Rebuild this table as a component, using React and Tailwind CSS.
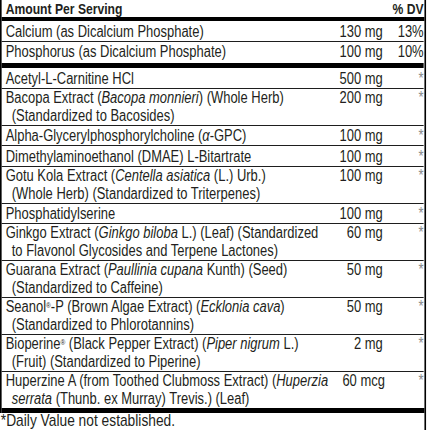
// Label is set in Arial metrics and squeezed horizontally to read as Arial Narrow / Helvetica Condensed.
const rows = [
  { name: ['Calcium (as Dicalcium Phosphate)'], amount: '130 mg', dv: '13%' },
  { name: ['Phosphorus (as Dicalcium Phosphate)'], amount: '100 mg', dv: '10%', bar: true },
  { name: ['Acetyl-L-Carnitine HCl'], amount: '500 mg' },
  {
    name: [
      <>Bacopa Extract (<i>Bacopa monnieri</i>) (Whole Herb)</>,
      '(Standardized to Bacosides)',
    ],
    amount: '200 mg',
  },
  { name: [<>Alpha-Glycerylphosphorylcholine (<i>α</i>-GPC)</>], amount: '100 mg' },
  { name: ['Dimethylaminoethanol (DMAE) L-Bitartrate'], amount: '100 mg' },
  {
    name: [
      <>Gotu Kola Extract (<i>Centella asiatica</i> (L.) Urb.)</>,
      '(Whole Herb) (Standardized to Triterpenes)',
    ],
    amount: '100 mg',
  },
  { name: ['Phosphatidylserine'], amount: '100 mg' },
  {
    name: [
      <>Ginkgo Extract (<i>Ginkgo biloba</i> L.) (Leaf) (Standardized</>,
      'to Flavonol Glycosides and Terpene Lactones)',
    ],
    amount: '60 mg',
  },
  {
    name: [
      <>Guarana Extract (<i>Paullinia cupana</i> Kunth) (Seed)</>,
      '(Standardized to Caffeine)',
    ],
    amount: '50 mg',
  },
  {
    name: [
      <>Seanol<sup className="text-[8px]">®</sup>-P (Brown Algae Extract) (<i>Ecklonia cava</i>)</>,
      '(Standardized to Phlorotannins)',
    ],
    amount: '50 mg',
  },
  {
    name: [
      <>Bioperine<sup className="text-[8px]">®</sup> (Black Pepper Extract) (<i>Piper nigrum</i> L.)</>,
      '(Fruit) (Standardized to Piperine)',
    ],
    amount: '2 mg',
  },
  {
    name: [
      <>Huperzine A (from Toothed Clubmoss Extract) (<i>Huperzia</i></>,
      <><i>serrata</i> (Thunb. ex Murray) Trevis.) (Leaf)</>,
    ],
    amount: '60 mcg',
    last: true,
  },
];

const Row = ({ row }) => {
  const single = row.name.length === 1;
  let cls = single ? 'pt-[1.5px]' : 'pt-0';
  if (row.bar) cls += ' pb-[2px]';
  else if (!row.last) cls += ' border-b border-[#1e1e1e]';

  return (
    <>
      <div className={`flex ${cls}`}>
        <div className="flex-1 pl-[5px] whitespace-nowrap">
          {row.name.map((line, i) => (
            <div key={i} className={i > 0 ? 'pl-[7.5px]' : ''}>
              {line}
            </div>
          ))}
        </div>
        <div className="w-[74px] text-right whitespace-nowrap">{row.amount}</div>
        <div className="w-[50.5px] text-right">
          {row.dv ? row.dv : <span className="text-[#8a8a8a]">*</span>}
        </div>
      </div>
      {row.bar && <div className="h-[5px] bg-black" />}
    </>
  );
};

export default function App() {
  return (
    <div className="w-[430px] h-[430px] bg-white overflow-hidden">
      <div className="w-[526px] h-full origin-top-left scale-x-[0.81] border-r-[2.5px] border-black font-['Liberation_Sans','Arial',sans-serif] text-[16px] leading-[18px] text-[#231f20]">
        <div className="border-l-[2.5px] border-black">
          {/* Header */}
          <div className="flex pr-[1px] text-[15px] font-bold leading-[17px]">
            <div className="flex-1 pl-[5px]">Amount Per Serving</div>
            <div>% DV</div>
          </div>
          <div className="h-[4px] bg-black" />

          <div className="pr-[1px]">
            {rows.map((row, i) => (
              <Row key={i} row={row} />
            ))}
          </div>
          <div className="h-[5px] bg-black" />
        </div>
        <div className="pl-[1px] text-[17px] leading-[16px]">*Daily Value not established.</div>
      </div>
    </div>
  );
}
